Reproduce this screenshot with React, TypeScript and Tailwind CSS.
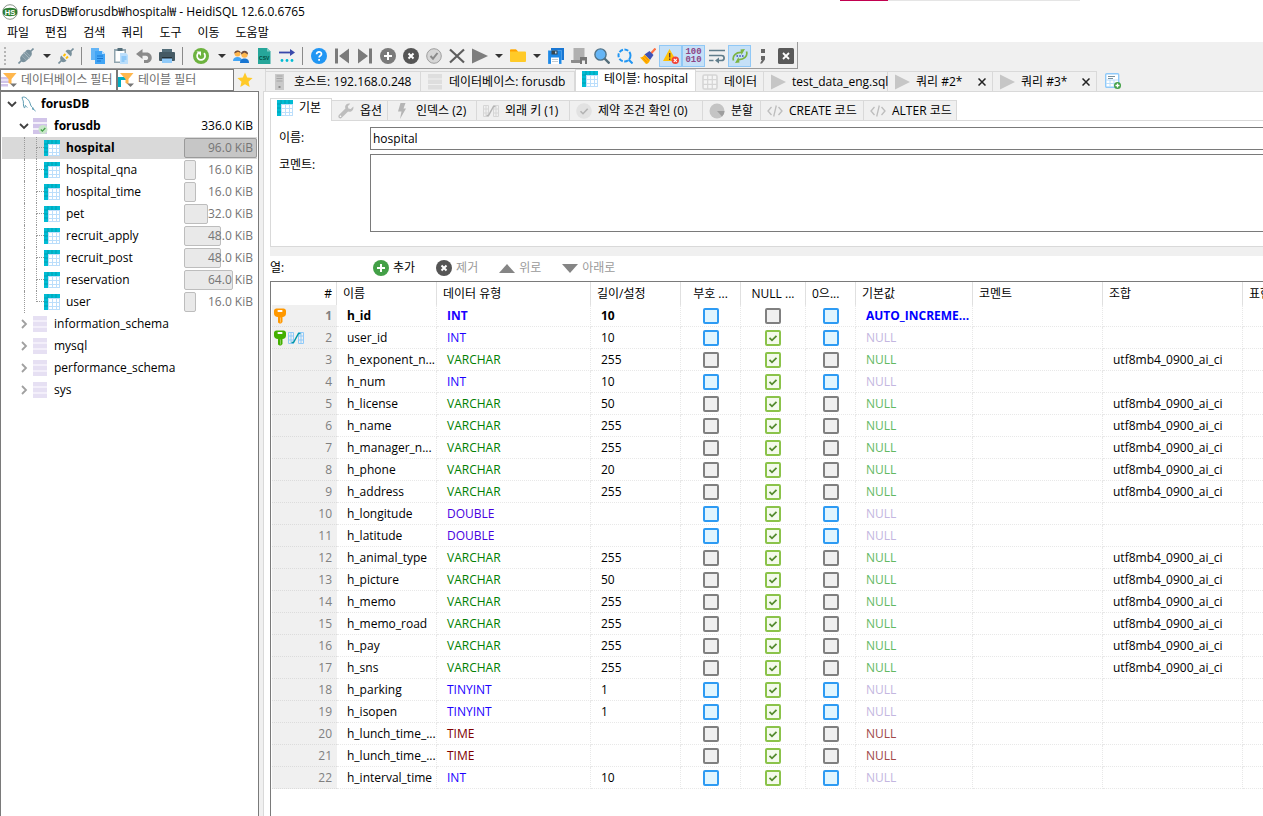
import type { ReactNode } from 'react';
import clsx from 'clsx';

type IconProps = { children: ReactNode; className?: string };

function Svg({ children, className }: IconProps) {
  return (
    <svg viewBox="0 0 16 16" className={clsx('size-4 shrink-0', className)} fill="none" aria-hidden="true">
      {children}
    </svg>
  );
}

/* ---------- object icons ---------- */

const TableIcon = () => (
  <Svg>
    <path d="M0 0h16v16H0z" fill="#BBDEFB" />
    <path d="M5 5h3v3H5zM9 5h3v3H9zM13 5h2v3h-2zM5 9h3v3H5zM9 9h3v3H9zM13 9h2v3h-2zM5 13h3v2H5zM9 13h3v2H9zM13 13h2v2h-2z" fill="#fff" />
    <path d="M0 0h16v4H4v12H0z" fill="#00BCD4" />
    <path d="M4 0v4M8 0v4M12 0v4M0 4h4M0 8h4M0 12h4" stroke="#0097A7" strokeWidth=".8" />
  </Svg>
);

const DbIcon = ({ active = false }: { active?: boolean }) => (
  <Svg>
    <path d="M1 0h14v4H1zM1 6h14v4H1zM1 12h14v4H1z" fill={active ? '#D1C4E9' : '#E6E0F3'} />
    <path d="M1 4h14v2H1zM1 10h14v2H1z" fill="#F3EFFA" />
    {active && (
      <>
        <circle cx="11" cy="11.5" r="4.5" fill="#C8E6C9" />
        <path d="M8.8 11.5l1.6 1.6 2.9-3.1" stroke="#43A047" strokeWidth="1.3" />
      </>
    )}
  </Svg>
);

const DolphinIcon = () => (
  <Svg>
    <path
      d="M1 1.5c1.6-1 3.6-.3 5 1.200C8.300 4.600 9 6.500 9.600 9c.5 1.300 1.500 2.500 3 3.300l-1.500.5c1.500.4 2.600 1.200 3.500 2.300M1 1.500c.2 1.600 1 2.500 1.300 3.600.3 1.500-.1 3.400.3 5 .2 1 .7 1.800 1 1.800.5-.4.3-1.600.7-2.400.8.4 1.200 1.400 2 2"
      stroke="#4A90A8"
      strokeWidth=".9"
    />
  </Svg>
);

const HostIcon = () => (
  <Svg>
    <path d="M3 0h9v16H3z" fill="#C9C9C9" />
    <path d="M4.500 2h6M4.500 4.500h6M4.500 7h6" stroke="#A5A5A5" />
    <path d="M6.500 12h2v2h-2z" fill="#8c8c8c" />
  </Svg>
);

const GrayDbIcon = () => (
  <Svg>
    <path d="M1 0h14v4.500H1zM1 5.500h14V10H1zM1 11h14v4.500H1z" fill="#DEDEDE" />
  </Svg>
);

const GridIcon = () => (
  <Svg>
    <rect x="1" y="1" width="14" height="14" rx="1.5" fill="#F5F5F5" stroke="#D5D5D5" strokeWidth="1.6" />
    <path d="M5.700 1v14M10.300 1v14M1 5.700h14M1 10.300h14" stroke="#D5D5D5" strokeWidth="1.2" />
  </Svg>
);

const PlayTabIcon = () => (
  <Svg>
    <path d="M1 .5L16 8 1 15.500z" fill="#C6C6C6" />
  </Svg>
);

const NewTabIcon = () => (
  <Svg>
    <rect x=".7" y=".7" width="13" height="13.5" rx="1" fill="#fff" stroke="#90CAF9" strokeWidth="1.4" />
    <path d="M1 7h12M1 10.500h12M5 7v7M9 7v7" stroke="#BBDEFB" />
    <path d="M3 3.500h7M3 5.500h5" stroke="#78909C" />
    <circle cx="12.5" cy="12.5" r="3.5" fill="#43A047" />
    <path d="M12.500 10.500v4M10.500 12.500h4" stroke="#fff" strokeWidth="1.3" />
  </Svg>
);

const WrenchIcon = () => (
  <Svg>
    <path d="M15.300 3.600l-2.500 2.400-2.400-.5-.6-2.300L12.200.8C10.300.2 8.300.9 7.500 2.600c-.5 1.100-.4 2.100-.1 3L.9 12c-.8.800-.7 2 0 2.800.8.8 2 .8 2.800 0l6.400-6.300c1.500.5 3.200.2 4.300-1 1-1 1.300-2.600.9-3.900z" fill="#BDBDBD" />
    <circle cx="2.500" cy="13.300" r=".8" fill="#fff" />
  </Svg>
);

const BoltIcon = () => (
  <Svg>
    <path d="M6.500 0h5L9.500 5.500H12L6 16l1.500-7.500H4z" fill="#B5B5B5" />
  </Svg>
);

const ForeignKeyIcon = ({ colored = false }: { colored?: boolean }) => (
  <Svg>
    <path
      d="M.5 2.500h5v11h-5zM3 2.500v11M.5 6h5M.5 10h5M10.500 2.500h5v11h-5zM13 2.500v11M10.500 6h5M10.500 10h5"
      stroke={colored ? '#90CAF9' : '#D6D6D6'}
      strokeWidth="1"
    />
    <path d="M3.500 12.500h2L10.500 3.500h2" stroke={colored ? '#0097A7' : '#B5B5B5'} strokeWidth="1.5" />
  </Svg>
);

const CheckTabIcon = () => (
  <Svg>
    <circle cx="8" cy="8" r="7.800" fill="#E2E2E2" />
    <path d="M4.500 8.200l2.500 2.500 4.700-5" stroke="#B3B3B3" strokeWidth="1.6" />
  </Svg>
);

const PieIcon = () => (
  <Svg>
    <circle cx="8" cy="8" r="7.5" fill="#C4C4C4" />
    <path d="M8 8h7.500A7.500 7.500 0 0 1 13 13.600z" fill="#9E9E9E" />
  </Svg>
);

const CodeIcon = () => (
  <Svg>
    <path d="M4.500 4L1 8l3.500 4M11.500 4L15 8l-3.500 4M9.300 2.500l-2.600 11" stroke="#BDBDBD" strokeWidth="1.3" />
  </Svg>
);

const KeyIcon = ({ color }: { color: string }) => (
  <svg viewBox="0 0 12 16" className="h-4 w-3 shrink-0" fill="none" aria-hidden="true">
    <path d="M2.500.5h7C11 .5 12 1.500 12 3v2.500C12 7.500 10.500 9 8.500 9v5L7 15.500H5.500L4 14.500V9C1.500 9 0 7.500 0 5.500V3C0 1.500 1 .5 2.500.5z" fill={color} />
    <rect x="3.5" y="2" width="5" height="2" rx=".8" fill="#fff" />
    <path d="M6.500 9.500v5" stroke="#fff" strokeOpacity=".35" />
  </svg>
);

const FunnelIcon = ({ table = false }: { table?: boolean }) => (
  <Svg>
    {table ? (
      <path d="M0 5h8v3H3v7H0z" fill="#00ACC1" />
    ) : (
      <path d="M0 5h8v2.500H0zM0 8.500h8V11H0zM0 12h7v2.500H0z" fill="#D1C4E9" />
    )}
    <path d="M2 1h13.500l-5 6v5.500L7.500 11V7z" fill="#FFB74D" />
    <path d="M9 11.500h7L12.500 15z" fill="#757575" />
  </Svg>
);

const StarIcon = () => (
  <Svg>
    <path d="M8 .6l2.200 5 5.400.5-4.100 3.600 1.200 5.400L8 12.300l-4.700 2.800 1.200-5.400L.4 6.100l5.400-.5z" fill="#FFCA28" />
  </Svg>
);

/* ---------- main toolbar icons ---------- */

const PlugIcon = ({ split = false }: { split?: boolean }) => (
  <Svg>
    <path d="M.5 15.500L4 12M12 4L15.500.5" stroke="#78909C" strokeWidth="1.6" />
    <path d="M3.200 7.500l5.300 5.300c-1.500 1.700-4 1.900-5.300.4s-1.500-4 0-5.700z" fill="#78909C" />
    <path d="M12.800 8.500L7.500 3.200c1.500-1.700 4-1.900 5.300-.4s1.500 4 0 5.700z" fill="#78909C" />
    {split ? (
      <path d="M5.500 8l2-2M8 10.500l2-2" stroke="#FFC107" strokeWidth="2" />
    ) : (
      <path d="M3.200 7.500l4.300-4.300 5.300 5.300-4.300 4.300z" fill="#8299A4" />
    )}
    <path d="M5.500 4.500l6 6" stroke="#B0BEC5" strokeWidth={split ? 0 : 0.8} />
  </Svg>
);

const CopyIcon = () => (
  <Svg>
    <path d="M1 0h8v12H1z" fill="#64B5F6" />
    <path d="M5 3h7l3 3v10H5z" fill="#42A5F5" />
    <path d="M12 3l3 3h-3z" fill="#BBDEFB" />
    <path d="M7 8h6M7 10.500h6M7 13h4" stroke="#1976D2" />
  </Svg>
);

const PasteIcon = () => (
  <Svg>
    <path d="M1 1h12v14H1z" fill="#90A4AE" />
    <path d="M2.500 3h9v10.500h-9z" fill="#fff" />
    <path d="M4.500 0h5v3h-5z" fill="#546E7A" />
    <path d="M7 5h6l2 2v9H7z" fill="#BBDEFB" />
    <path d="M8.500 9h5M8.500 11h5M8.500 13h3" stroke="#64B5F6" />
  </Svg>
);

const UndoIcon = () => (
  <Svg>
    <path d="M6.500 1L0 6l6.500 5V7.800h3.300c3 0 3.200 4.200 0 4.200H8v3h2.500c7 0 7-10.500 0-10.500h-4z" fill="#8A8A8A" />
  </Svg>
);

const PrintIcon = () => (
  <Svg>
    <path d="M3 1h10v4H3z" fill="#546E7A" />
    <rect y="4" width="16" height="9" rx="1" fill="#455A64" />
    <path d="M3 9h10v6H3z" fill="#90CAF9" />
    <path d="M3 9h10v1.500H3z" fill="#263238" />
  </Svg>
);

const RefreshIcon = () => (
  <Svg>
    <circle cx="8" cy="8" r="8" fill="#6DB33F" />
    <path d="M11 5.200a4 4 0 1 1-5.500-.3" stroke="#fff" strokeWidth="1.7" />
    <path d="M3.500 3.500H8V8z" fill="#fff" />
  </Svg>
);

const UsersIcon = () => (
  <Svg>
    <path d="M0 13c0-3 2-4 4.500-4S9 10 9 13z" fill="#42A5F5" />
    <path d="M7 15c0-3.500 2-4.500 4.500-4.500S16 11.500 16 15z" fill="#1976D2" />
    <circle cx="4.5" cy="5.5" r="3" fill="#FFB74D" />
    <circle cx="11.5" cy="6.5" r="3.2" fill="#FFB74D" />
    <path d="M1.300 5.500C1 1.500 8 1.500 7.700 5L5 3.800zM8 6.500c-.5-5 7.500-5 7 0l-3.500-2z" fill="#6D4C41" />
  </Svg>
);

const CsvIcon = () => (
  <Svg>
    <path d="M2 0h9l3.500 3.500V16H2z" fill="#26A69A" />
    <path d="M11 0l3.500 3.500H11z" fill="#80CBC4" />
    <text x="8.2" y="11.5" textAnchor="middle" fontSize="5" fontWeight="700" fill="#004D40" className="font-['Liberation_Sans',sans-serif]">CSV</text>
  </Svg>
);

const TransferIcon = () => (
  <Svg>
    <path d="M0 4.500h12" stroke="#3949AB" strokeWidth="1.8" />
    <path d="M11 1l5 3.500L11 8z" fill="#3949AB" />
    <circle cx="3" cy="12.5" r="1.4" fill="#00BCD4" />
    <circle cx="8" cy="12.5" r="1.4" fill="#00BCD4" />
    <circle cx="13" cy="12.5" r="1.4" fill="#00BCD4" />
  </Svg>
);

const HelpIcon = () => (
  <Svg>
    <circle cx="8" cy="8" r="8" fill="#2196F3" />
    <path d="M5.600 6.200c0-3.200 4.900-3 4.900-.2 0 1.800-2.400 1.800-2.400 3.600" stroke="#fff" strokeWidth="1.7" />
    <path d="M7.200 11h1.800v1.800H7.200z" fill="#fff" />
  </Svg>
);

const FirstIcon = ({ flip = false }: { flip?: boolean }) => (
  <Svg className={flip ? '-scale-x-100' : ''}>
    <path d="M1 .5h3v15H1zM15 .5v15L5 8z" fill="#7A7A7A" />
  </Svg>
);

const RoundIcon = ({ bg, d, stroke = '#fff', ring }: { bg: string; d: string; stroke?: string; ring?: string }) => (
  <Svg>
    <circle cx="8" cy="8" r={ring ? 7.3 : 8} fill={bg} stroke={ring} />
    <path d={d} stroke={stroke} strokeWidth="2" />
  </Svg>
);

const PLUS = 'M8 4v8M4 8h8';
const CROSS = 'M5.500 5.500l5 5M10.500 5.500l-5 5';

const CancelIcon = () => (
  <Svg>
    <path d="M1 1.500l14 13M15 1.500l-14 13" stroke="#5E5E5E" strokeWidth="2.2" />
  </Svg>
);

const RunIcon = () => (
  <Svg>
    <path d="M0 .5L16 8 0 15.500z" fill="#7D7D7D" />
  </Svg>
);

const FolderIcon = () => (
  <Svg>
    <path d="M0 2.500C0 2 .5 1.500 1 1.500h5l2 2h7c.5 0 1 .5 1 1V13c0 .5-.5 1-1 1H1c-.5 0-1-.5-1-1z" fill="#FFCA28" />
    <path d="M0 3.500V2.500c0-.5.5-1 1-1h5l2 2z" fill="#FFA000" />
  </Svg>
);

const SaveIcon = () => (
  <Svg>
    <path d="M3 0h13v12H3z" fill="#1976D2" />
    <path d="M0 2.500h13.500V16H0z" fill="#1E88E5" stroke="#90CAF9" strokeWidth=".4" />
    <path d="M3 9.500h8V16H3z" fill="#fff" />
    <path d="M4 11.500h6M4 13.500h6" stroke="#B0BEC5" strokeWidth=".8" />
    <path d="M3.500 2.500h6v4h-6z" fill="#37474F" />
    <path d="M7 3.500h1.500v2H7z" fill="#BBDEFB" />
  </Svg>
);

const SaveSnippetIcon = () => (
  <Svg>
    <path d="M2.500 0h11v12h-11z" fill="#B0B0B0" />
    <path d="M0 12h10v3H1c-.6 0-1-.4-1-1z" fill="#8C8C8C" />
    <path d="M9 9h7v7H9z" fill="#757575" />
    <path d="M11 12.500h3V16h-3z" fill="#eee" />
  </Svg>
);

const SearchIcon = () => (
  <Svg>
    <path d="M10.500 10.500l5 5" stroke="#546E7A" strokeWidth="2.4" />
    <circle cx="6.5" cy="6.5" r="5.6" fill="#64B5F6" stroke="#4F7288" strokeWidth="1.4" />
  </Svg>
);

const ReplaceIcon = () => (
  <Svg>
    <circle cx="7.5" cy="7.5" r="6" stroke="#2196F3" strokeWidth="2" strokeDasharray="4 1.5" />
    <path d="M11.500 11.500l4 4" stroke="#2196F3" strokeWidth="2" />
  </Svg>
);

const BroomIcon = () => (
  <Svg>
    <path d="M15.500.5L11 5.500" stroke="#FF7043" strokeWidth="2.2" />
    <path d="M9.500 3l4 4L10 12 4.500 6.500z" fill="#3F51B5" />
    <path d="M4.500 6.500L10 12c-.5 2-2 4-4 4L0 9.500c2 0 3.500-1 4.500-3z" fill="#FFB300" />
    <path d="M2.500 9.500l4.500 5M4.500 8l4 4.500" stroke="#F57C00" strokeWidth=".8" />
  </Svg>
);

const WarningIcon = () => (
  <Svg>
    <path d="M6.500 1L13.500 13H0z" fill="#FFC107" />
    <path d="M6.700 5v4.500M6.700 10.500V12" stroke="#5D4037" strokeWidth="1.4" />
    <circle cx="12.3" cy="12.3" r="3.7" fill="#F44336" />
    <path d="M10.800 10.800l3 3M13.800 10.800l-3 3" stroke="#fff" strokeWidth="1.1" />
  </Svg>
);

const BinaryIcon = () => (
  <span className="flex flex-col font-['Liberation_Mono',monospace] text-[9px] leading-2 font-bold text-[#8E4585]">
    <span>100</span>
    <span>010</span>
  </span>
);

const WrapIcon = () => (
  <Svg>
    <path d="M0 2.500h16M0 7.500h12.500c3.500 0 3.500 5 0 5H8M0 12.500h4.500" stroke="#607D8B" strokeWidth="1.7" />
    <path d="M10 9.500v6l-4-3z" fill="#607D8B" />
  </Svg>
);

const ReformatIcon = () => (
  <Svg>
    <path d="M1.500 12.500C0 8 4 4 10 4.500" stroke="#7CB342" strokeWidth="1.7" />
    <path d="M14.500 3.500C16 8 12 12 6 11.500" stroke="#7CB342" strokeWidth="1.7" />
    <path d="M8.500 1.500L13 1 9.500 7zM7.500 14.500L3 15l3.500-6z" fill="#7CB342" />
    <path d="M4.500 8H6M7.300 8h1.500M10 8h1.500" stroke="#3949AB" strokeWidth="1.5" />
  </Svg>
);

const SemicolonIcon = () => (
  <Svg>
    <path d="M6 1h4v4H6zM6 8h4v3.500L7 15.500H5L7 12H6z" fill="#666" />
  </Svg>
);

const CloseBoxIcon = () => (
  <Svg>
    <rect width="16" height="16" rx="1.5" fill="#595959" />
    <path d="M5 5l6 6M11 5l-6 6" stroke="#fff" strokeWidth="1.8" />
  </Svg>
);

function ToolButton({ label, children, pressed = false, wide = false }: { label: string; children: ReactNode; pressed?: boolean; wide?: boolean }) {
  return (
    <button
      type="button"
      aria-label={label}
      className={clsx(
        'flex h-[22px] shrink-0 items-center justify-center',
        wide ? 'w-[27px]' : 'w-[23px]',
        pressed && 'border border-[#90C8F6] bg-[#C5E0F7]'
      )}
    >
      {children}
    </button>
  );
}

const Caret = ({ label }: { label: string }) => (
  <button type="button" aria-label={label} className="flex h-[22px] w-[15px] shrink-0 items-center justify-center">
    <svg viewBox="0 0 8 4" className="h-1 w-2" aria-hidden="true">
      <path d="M0 0h8L4 4z" fill="#333" />
    </svg>
  </button>
);

const Separator = () => (
  <span className="flex h-[18px] w-[9px] shrink-0 justify-center">
    <span className="w-px bg-[#8a8a8a]" />
  </span>
);

function Toolbar() {
  return (
    <div className="flex">
      <div className="flex h-[27px] items-center border-r border-b border-[#9a9a9a] pt-0.5">
        <span className="ml-1 h-[18px] w-2 border-l-2 border-dotted border-[#b5b5b5]" />
        <ToolButton label="연결" wide><PlugIcon /></ToolButton>
        <Caret label="연결 목록" />
        <ToolButton label="연결 끊기"><PlugIcon split /></ToolButton>
        <Separator />
        <ToolButton label="복사"><CopyIcon /></ToolButton>
        <ToolButton label="붙여넣기"><PasteIcon /></ToolButton>
        <ToolButton label="실행 취소"><UndoIcon /></ToolButton>
        <ToolButton label="인쇄"><PrintIcon /></ToolButton>
        <Separator />
        <ToolButton label="새로 고침" wide><RefreshIcon /></ToolButton>
        <Caret label="새로 고침 옵션" />
        <ToolButton label="사용자 관리"><UsersIcon /></ToolButton>
        <ToolButton label="CSV 내보내기"><CsvIcon /></ToolButton>
        <ToolButton label="데이터 전송"><TransferIcon /></ToolButton>
        <Separator />
        <ToolButton label="도움말"><HelpIcon /></ToolButton>
        <ToolButton label="처음"><FirstIcon /></ToolButton>
        <ToolButton label="마지막"><FirstIcon flip /></ToolButton>
        <ToolButton label="행 추가"><RoundIcon bg="#7A7A7A" d={PLUS} /></ToolButton>
        <ToolButton label="행 삭제"><RoundIcon bg="#555" d={CROSS} /></ToolButton>
        <ToolButton label="적용"><RoundIcon bg="#D6D6D6" ring="#9E9E9E" stroke="#8A8A8A" d="M4.500 8l2.500 2.700L11.500 5" /></ToolButton>
        <ToolButton label="취소"><CancelIcon /></ToolButton>
        <ToolButton label="실행"><RunIcon /></ToolButton>
        <Caret label="실행 옵션" />
        <ToolButton label="열기"><FolderIcon /></ToolButton>
        <Caret label="최근 파일" />
        <ToolButton label="저장"><SaveIcon /></ToolButton>
        <ToolButton label="스니펫 저장"><SaveSnippetIcon /></ToolButton>
        <ToolButton label="찾기"><SearchIcon /></ToolButton>
        <ToolButton label="바꾸기"><ReplaceIcon /></ToolButton>
        <ToolButton label="지우기"><BroomIcon /></ToolButton>
        <ToolButton label="오류 시 중지" pressed><WarningIcon /></ToolButton>
        <ToolButton label="이진 데이터" pressed><BinaryIcon /></ToolButton>
        <ToolButton label="줄 바꿈"><WrapIcon /></ToolButton>
        <ToolButton label="SQL 정리" pressed><ReformatIcon /></ToolButton>
        <ToolButton label="구분자"><SemicolonIcon /></ToolButton>
        <ToolButton label="닫기"><CloseBoxIcon /></ToolButton>
      </div>
    </div>
  );
}

/* ---------- sidebar ---------- */

const tables = [
  { name: 'hospital', size: 96, selected: true },
  { name: 'hospital_qna', size: 16 },
  { name: 'hospital_time', size: 16 },
  { name: 'pet', size: 32 },
  { name: 'recruit_apply', size: 48 },
  { name: 'recruit_post', size: 48 },
  { name: 'reservation', size: 64 },
  { name: 'user', size: 16 },
];

const schemas = ['information_schema', 'mysql', 'performance_schema', 'sys'];

const Chevron = ({ open = false }: { open?: boolean }) => (
  <svg viewBox="0 0 10 10" className="size-[10px] shrink-0" fill="none" aria-hidden="true">
    <path d={open ? 'M1 3l4 4 4-4' : 'M3 1l4 4-4 4'} stroke={open ? '#404040' : '#A0A0A0'} strokeWidth="1.8" />
  </svg>
);

function Filter({ label, children }: { label: string; children: ReactNode }) {
  return (
    <label className="flex h-[22px] w-[117px] items-center border border-[#7a7a7a] bg-white">
      {children}
      <input
        aria-label={label}
        placeholder={label}
        className="ml-1 min-w-0 flex-1 outline-none placeholder:text-[#6d6d6d]"
      />
    </label>
  );
}

function Sidebar() {
  return (
    <aside className="flex w-[259px] shrink-0 flex-col">
      <div className="flex items-center">
        <Filter label="데이터베이스 필터"><FunnelIcon /></Filter>
        <Filter label="테이블 필터"><FunnelIcon table /></Filter>
        <button type="button" aria-label="즐겨찾기" className="ml-[3px]"><StarIcon /></button>
      </div>
      <div className="flex-1 border-x border-t border-[#7a7a7a] bg-white px-px pt-px">
        <ul>
          <li>
            <div className="flex h-[22px] items-center pl-[5px] font-bold">
              <Chevron open />
              <span className="mr-1 ml-1"><DolphinIcon /></span>
              forusDB
            </div>
            <ul>
              <li>
                <div className="flex h-[22px] items-center pr-1 pl-[17px]">
                  <Chevron open />
                  <span className="mr-1.5 ml-[3px]"><DbIcon active /></span>
                  <span className="flex-1 font-bold">forusdb</span>
                  336.0 KiB
                </div>
                <ul>
                  {tables.map((t, i) => (
                    <li key={t.name} className={clsx('flex h-[22px] items-center', t.selected && 'bg-[#D9D9D9]')}>
                      <span className="ml-[22px] h-full w-3 border-l border-dotted border-[#9a9a9a]" />
                      <span className="flex h-full w-2 flex-col">
                        <span className="h-[11px] border-b border-l border-dotted border-[#9a9a9a]" />
                        {i < tables.length - 1 && <span className="h-[11px] border-l border-dotted border-[#9a9a9a]" />}
                      </span>
                      <TableIcon />
                      <span className={clsx('ml-1.5 flex-1', t.selected && 'font-bold')}>{t.name}</span>
                      <span className="relative h-5 w-[73px]">
                        <span
                          className={clsx(
                            'absolute inset-y-0 left-0 rounded-xs border',
                            t.selected ? 'border-[#9a9a9a] bg-[#C6C6C6]' : 'border-[#BDBDBD] bg-[#E9E9E9]'
                          )}
                          style={{ width: `${(t.size / 96) * 100}%` }}
                        />
                        <span className="relative block pr-1 text-right leading-5 text-[#757575]">{t.size}.0 KiB</span>
                      </span>
                    </li>
                  ))}
                </ul>
              </li>
              {schemas.map((s) => (
                <li key={s} className="flex h-[22px] items-center pl-[17px]">
                  <Chevron />
                  <span className="mr-1.5 ml-[3px]"><DbIcon /></span>
                  {s}
                </li>
              ))}
            </ul>
          </li>
        </ul>
      </div>
    </aside>
  );
}

/* ---------- main area ---------- */

type TabDef = { label: string; icon: ReactNode; width: string; active?: boolean; closable?: boolean };

const pageTabs: TabDef[] = [
  { label: '호스트: 192.168.0.248', icon: <HostIcon />, width: 'w-[155px]' },
  { label: '데이터베이스: forusdb', icon: <GrayDbIcon />, width: 'w-[154px]' },
  { label: '테이블: hospital', icon: <TableIcon />, width: 'w-[121px]', active: true },
  { label: '데이터', icon: <GridIcon />, width: 'w-[68px]' },
  { label: 'test_data_eng.sql', icon: <PlayTabIcon />, width: 'w-[124px]' },
  { label: '쿼리 #2*', icon: <PlayTabIcon />, width: 'w-[105px]', closable: true },
  { label: '쿼리 #3*', icon: <PlayTabIcon />, width: 'w-[104px]', closable: true },
];

const detailTabs: TabDef[] = [
  { label: '기본', icon: <TableIcon />, width: 'w-[62px]', active: true },
  { label: '옵션', icon: <WrenchIcon />, width: 'w-[56px]' },
  { label: '인덱스 (2)', icon: <BoltIcon />, width: 'w-[89px]' },
  { label: '외래 키 (1)', icon: <ForeignKeyIcon />, width: 'w-[93px]' },
  { label: '제약 조건 확인 (0)', icon: <CheckTabIcon />, width: 'w-[133px]' },
  { label: '분할', icon: <PieIcon />, width: 'w-[58px]' },
  { label: 'CREATE 코드', icon: <CodeIcon />, width: 'w-[103px]' },
  { label: 'ALTER 코드', icon: <CodeIcon />, width: 'w-[93px]' },
];

function Tab({ tab }: { tab: TabDef }) {
  return (
    <div
      role="tab"
      aria-selected={!!tab.active}
      className={clsx(
        'flex shrink-0 items-center border-t border-r border-[#d9d9d9] whitespace-nowrap',
        tab.width,
        tab.active ? '-mb-px h-[23px] border-l bg-white pb-1' : 'h-5'
      )}
    >
      <button type="button" className="flex items-center gap-1.5 pl-1.5">
        {tab.icon}
        {tab.label}
      </button>
      {tab.closable && (
        <button type="button" aria-label={`${tab.label} 닫기`} className="mr-1.5 ml-auto">
          <svg viewBox="0 0 8 8" className="size-2" aria-hidden="true">
            <path d="M.5.5l7 7M7.500.5l-7 7" stroke="#222" strokeWidth="1.5" />
          </svg>
        </button>
      )}
    </div>
  );
}

type Column = { name: string; type: string; len?: string; pk?: boolean; fk?: boolean };

const columns: Column[] = [
  { name: 'h_id', type: 'INT', len: '10', pk: true },
  { name: 'user_id', type: 'INT', len: '10', fk: true },
  { name: 'h_exponent_n...', type: 'VARCHAR', len: '255' },
  { name: 'h_num', type: 'INT', len: '10' },
  { name: 'h_license', type: 'VARCHAR', len: '50' },
  { name: 'h_name', type: 'VARCHAR', len: '255' },
  { name: 'h_manager_n...', type: 'VARCHAR', len: '255' },
  { name: 'h_phone', type: 'VARCHAR', len: '20' },
  { name: 'h_address', type: 'VARCHAR', len: '255' },
  { name: 'h_longitude', type: 'DOUBLE' },
  { name: 'h_latitude', type: 'DOUBLE' },
  { name: 'h_animal_type', type: 'VARCHAR', len: '255' },
  { name: 'h_picture', type: 'VARCHAR', len: '50' },
  { name: 'h_memo', type: 'VARCHAR', len: '255' },
  { name: 'h_memo_road', type: 'VARCHAR', len: '255' },
  { name: 'h_pay', type: 'VARCHAR', len: '255' },
  { name: 'h_sns', type: 'VARCHAR', len: '255' },
  { name: 'h_parking', type: 'TINYINT', len: '1' },
  { name: 'h_isopen', type: 'TINYINT', len: '1' },
  { name: 'h_lunch_time_...', type: 'TIME' },
  { name: 'h_lunch_time_...', type: 'TIME' },
  { name: 'h_interval_time', type: 'INT', len: '10' },
];

const typeColors: Record<string, string> = {
  INT: 'text-[#1a00ff]',
  TINYINT: 'text-[#1a00ff]',
  DOUBLE: 'text-[#4800e0]',
  VARCHAR: 'text-[#008000]',
  TIME: 'text-[#800000]',
};

const nullColors: Record<string, string> = {
  VARCHAR: 'text-[#62b862]',
  TIME: 'text-[#a04848]',
};

const headers = [
  { label: '이름', width: 'w-[100px]' },
  { label: '데이터 유형', width: 'w-[154px]' },
  { label: '길이/설정', width: 'w-[90px]' },
  { label: '부호 ...', width: 'w-[60px]', center: true },
  { label: 'NULL ...', width: 'w-[65px]', center: true },
  { label: '0으...', width: 'w-[50px]' },
  { label: '기본값', width: 'w-[117px]' },
  { label: '코멘트', width: 'w-[130px]' },
  { label: '조합', width: 'w-[140px]' },
  { label: '표현식', width: 'w-[120px]' },
];

type Tone = 'blue' | 'gray' | 'green';

const tones: Record<Tone, string> = {
  blue: 'border-[#2E9BF3] bg-[#E1F5FE]',
  gray: 'border-[#808080] bg-[#F0F0F0]',
  green: 'border-[#8BC34A] bg-[#F4FAEC]',
};

function CheckCell({ label, tone }: { label: string; tone: Tone }) {
  return (
    <td className="border-r border-b border-dotted border-[#e8e8e8] p-0">
      <span className="relative mx-auto block size-4">
        <input
          type="checkbox"
          aria-label={label}
          defaultChecked={tone === 'green'}
          className={clsx('block size-4 appearance-none rounded-xs border-2', tones[tone])}
        />
        {tone === 'green' && (
          <Svg className="pointer-events-none absolute inset-0">
            <path d="M4.500 7.800l2.500 2.500 4.500-4.500" stroke="#558B2F" strokeWidth="1.8" />
          </Svg>
        )}
      </span>
    </td>
  );
}

const cell = 'border-r border-b border-dotted border-[#e8e8e8] py-0 pr-0 pl-[10px]';

function ColumnsGrid() {
  return (
    <div className="flex-1 overflow-hidden border-t border-l border-[#7a7a7a] pl-px">
      <table className="w-[1091px] table-fixed border-separate border-spacing-0 whitespace-nowrap">
        <thead>
          <tr className="h-[23px]">
            <th className="w-[65px] border-r border-[#e0e0e0] py-0 pr-1 pl-0 text-right font-normal">#</th>
            {headers.map((h) => (
              <th
                key={h.label}
                className={clsx(
                  'overflow-hidden border-r border-[#e0e0e0] py-0 pr-0 font-normal',
                  h.width,
                  h.center ? 'pl-0 text-center' : 'pl-1.5 text-left'
                )}
              >
                {h.label}
              </th>
            ))}
          </tr>
        </thead>
        <tbody>
          {columns.map((c, i) => {
            const text = c.type === 'VARCHAR';
            const plain = text || c.type === 'TIME';
            return (
              <tr key={i} className={clsx('h-[22px]', c.pk && 'font-bold')}>
                <td className="border-b border-dotted border-[#dcdcdc] bg-[#F0F0F0] py-0 pr-[5px] pl-0.5 text-right text-[#808080]">
                  <div className="flex items-center gap-0.5">
                    {c.pk && <KeyIcon color="#FF9800" />}
                    {c.fk && <KeyIcon color="#43B000" />}
                    {c.fk && <ForeignKeyIcon colored />}
                    <span className="flex-1">{i + 1}</span>
                  </div>
                </td>
                <td className={cell}>{c.name}</td>
                <td className={clsx(cell, typeColors[c.type])}>{c.type}</td>
                <td className={cell}>{c.len}</td>
                <CheckCell label={`${c.name} 부호 없음`} tone={plain ? 'gray' : 'blue'} />
                <CheckCell label={`${c.name} NULL 허용`} tone={c.pk ? 'gray' : 'green'} />
                <CheckCell label={`${c.name} 0으로 채움`} tone={plain ? 'gray' : 'blue'} />
                <td className={clsx(cell, c.pk ? 'text-[#0000ff]' : nullColors[c.type] ?? 'text-[#c3b6e0]')}>
                  {c.pk ? 'AUTO_INCREME...' : 'NULL'}
                </td>
                <td className={cell} />
                <td className={cell}>{text && 'utf8mb4_0900_ai_ci'}</td>
                <td className={cell} />
              </tr>
            );
          })}
        </tbody>
      </table>
    </div>
  );
}

const Triangle = ({ down = false }: { down?: boolean }) => (
  <Svg>
    <path d={down ? 'M0 4h16l-8 9z' : 'M0 13h16L8 4z'} fill="#858585" />
  </Svg>
);

function TableEditor() {
  return (
    <div className="flex min-h-0 flex-1 flex-col border-t border-l border-[#d9d9d9] bg-white pt-1.5 pl-1.5">
      <div className="border-b border-[#d9d9d9]">
        <div role="tablist" className="flex h-[23px] items-end border-b border-[#d9d9d9]">
          {detailTabs.map((t) => (
            <div key={t.label} className={clsx('flex', !t.active && 'bg-[#F0F0F0]')}>
              <Tab tab={t} />
            </div>
          ))}
        </div>
        <div className="border-l border-[#d9d9d9] pt-[6px] pb-[14px] pl-2">
          <div className="flex">
            <label htmlFor="table-name" className="w-[91px] pt-[3px] leading-4">이름:</label>
            <input id="table-name" defaultValue="hospital" className="h-[23px] min-w-0 flex-1 border-y border-l border-[#7a7a7a] px-0.5 outline-none" />
          </div>
          <div className="mt-1 flex">
            <label htmlFor="table-comment" className="w-[91px] pt-[3px] leading-4">코멘트:</label>
            <textarea id="table-comment" className="h-[78px] min-w-0 flex-1 resize-none border-y border-l border-[#7a7a7a] outline-none" />
          </div>
        </div>
      </div>
      <div className="h-[9px] bg-[#F0F0F0]" />
      <div className="flex h-[25px] items-center gap-[21px] pb-0.5 text-[#9a9a9a]">
        <span className="w-[82px] text-black">열:</span>
        <button type="button" className="flex items-center gap-1 text-black"><RoundIcon bg="#43A047" d={PLUS} />추가</button>
        <button type="button" className="flex items-center gap-1"><RoundIcon bg="#555" d={CROSS} />제거</button>
        <button type="button" className="flex items-center gap-1"><Triangle />위로</button>
        <button type="button" className="flex items-center gap-1"><Triangle down />아래로</button>
      </div>
      <ColumnsGrid />
    </div>
  );
}

export default function App() {
  return (
    <div className="flex h-screen flex-col overflow-hidden bg-[#F0F0F0] font-['Open_Sans','Noto_Sans_CJK_KR',sans-serif] text-xs text-black">
      <header className="relative bg-white">
        <div className="absolute top-0 left-[840px] flex h-px w-60 bg-[#e5e5e5]">
          <span className="w-12 bg-[#C2004F]" />
        </div>
        <div className="flex h-6 items-center gap-1 pl-0.5">
          <Svg>
            <circle cx="8" cy="8" r="7.3" fill="#fff" stroke="#8a968a" />
            <path d="M1 6C3 3 13 3 15 6v4c-2 3-12 3-14 0z" fill="#2E7D32" />
            <text x="8" y="10.6" textAnchor="middle" fontSize="7.5" fontWeight="700" fill="#fff" className="font-['Liberation_Sans',sans-serif]">HS</text>
          </Svg>
          <h1>forusDB₩forusdb₩hospital₩ - HeidiSQL 12.6.0.6765</h1>
        </div>
        <nav className="flex h-[18px] items-center gap-4 pl-[7px]">
          {['파일', '편집', '검색', '쿼리', '도구', '이동', '도움말'].map((m) => (
            <button key={m} type="button">{m}</button>
          ))}
        </nav>
      </header>
      <Toolbar />
      <div className="flex min-h-0 flex-1">
        <Sidebar />
        <main className="ml-1 flex min-w-0 flex-1 flex-col">
          <div className="flex h-[22px] items-end pl-0.5">
            <div role="tablist" className="flex items-end border-l border-[#d9d9d9]">
              {pageTabs.map((t) => (
                <Tab key={t.label} tab={t} />
              ))}
            </div>
            <button type="button" aria-label="새 쿼리 탭" className="mb-0.5 ml-2"><NewTabIcon /></button>
          </div>
          <TableEditor />
        </main>
      </div>
    </div>
  );
}
